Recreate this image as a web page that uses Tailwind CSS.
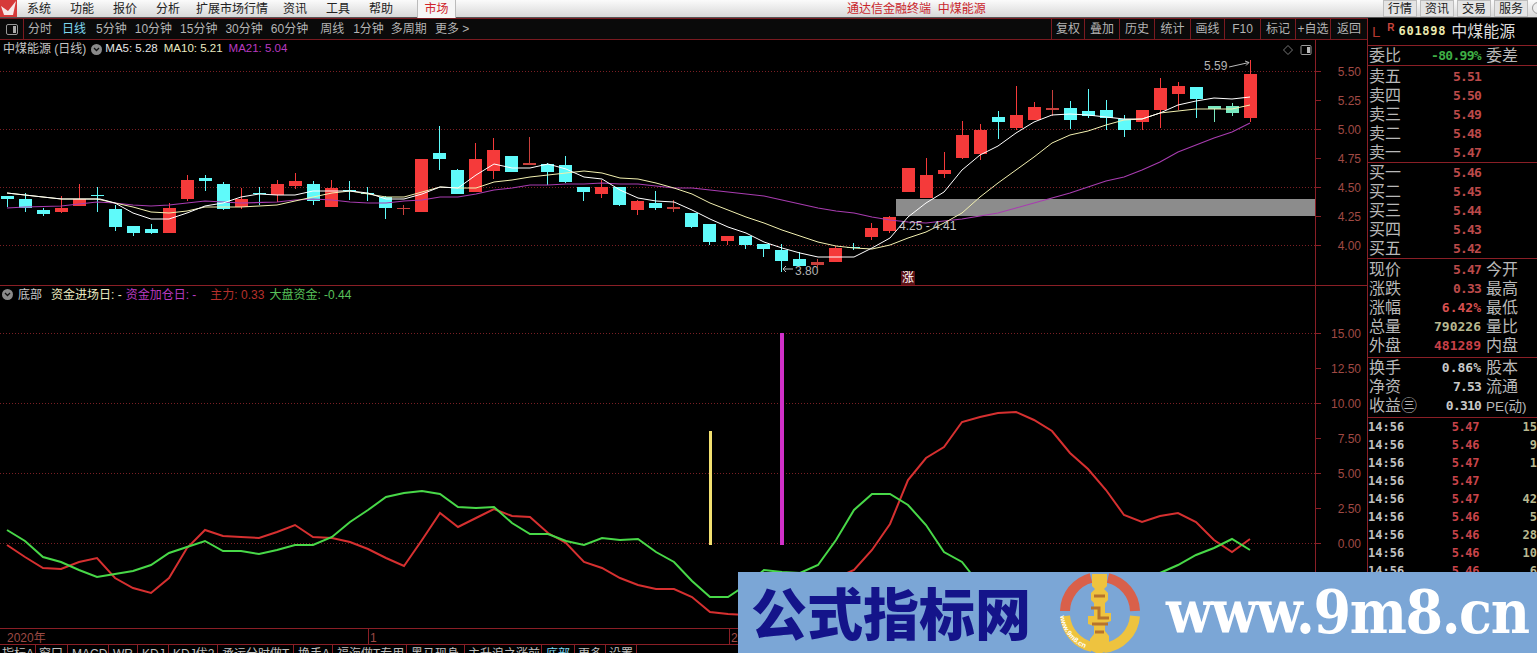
<!DOCTYPE html>
<html lang="zh-CN">
<head>
<meta charset="UTF-8">
<script src="https://cdn.jsdelivr.net/npm/@tailwindcss/browser@4"></script>
<title>通达信金融终端 中煤能源</title>
</head>
<body class="bg-black">
<div class="relative w-[1537px] h-[653px] overflow-hidden bg-black font-['Liberation_Sans','Noto_Sans_CJK_SC',sans-serif] text-[#c8c8c8]">

    <!-- title bar -->
    <div class="relative flex items-center h-[18px] bg-gradient-to-b from-[#fbfbfb] to-[#d8d8d8] text-[#222] text-[12px] border-b border-[#555]">
        <svg class="absolute left-0 top-0" width="17" height="17" viewBox="0 0 17 17"><rect width="17" height="17" fill="#d63a3a"/><path d="M1 6l7 5 8-10-3 14H4z" fill="#f6e8e8"/></svg>
        <div class="flex items-center ml-[27px] gap-[19px]">
            <span>系统</span><span>功能</span><span>报价</span><span>分析</span><span class="-ml-[3px]">扩展市场行情</span><span class="-ml-[4px]">资讯</span><span>工具</span><span>帮助</span>
        </div>
        <div class="ml-[24px] h-[18px] w-[39px] flex items-center justify-center bg-[#f6f6f6] border-x border-[#bbb] text-[#d0242c]">市场</div>
        <div class="absolute left-[847px] text-[#c9252c]">通达信金融终端&nbsp;&nbsp;中煤能源</div>
        <div class="absolute left-[1383px] flex gap-[3px]">
            <span class="w-[34px] h-[17px] flex items-center justify-center bg-[#e4e4e4] border border-[#bdbdbd]">行情</span>
            <span class="w-[34px] h-[17px] flex items-center justify-center bg-[#e4e4e4] border border-[#bdbdbd]">资讯</span>
            <span class="w-[34px] h-[17px] flex items-center justify-center bg-[#e4e4e4] border border-[#bdbdbd]">交易</span>
            <span class="w-[34px] h-[17px] flex items-center justify-center bg-[#e4e4e4] border border-[#bdbdbd]">服务</span>
            <span class="w-[12px] h-[12px] mt-[2px] ml-[1px] rounded-full bg-[#eee] border border-[#999]"></span>
        </div>
    </div>

    <div class="flex h-[635px]">
        <!-- left: toolbar + charts -->
        <div class="relative w-[1367px] shrink-0 flex flex-col">
            <div class="flex shrink-0 items-center h-[22px] bg-[#0a0a0a] border-t border-b border-[#7a1a20] text-[12px] text-[#b4b4b4]">
                <div class="w-[24px] h-full flex items-center justify-center border-r border-[#7a1a20]">
                    <svg width="12" height="11" viewBox="0 0 12 11"><rect x="0.5" y="0.5" width="11" height="10" rx="1.5" fill="none" stroke="#999"/><rect x="7" y="2" width="3" height="7" fill="#aaa"/></svg>
                </div>
                <div class="flex items-center ml-[4px]">
                    <span>分时</span><span class="ml-[10px] text-[#7fd8f0]">日线</span><span class="ml-[10px]">5分钟</span><span class="ml-[8px]">10分钟</span><span class="ml-[8px]">15分钟</span><span class="ml-[8px]">30分钟</span><span class="ml-[8px]">60分钟</span><span class="ml-[12px]">周线</span><span class="ml-[9px]">1分钟</span><span class="ml-[7px]">多周期</span><span class="ml-[8px]">更多 &gt;</span>
                </div>
                <div class="ml-auto flex h-full">
                    <span class="w-[33px] flex items-center justify-center border-l border-[#7a1a20]">复权</span>
                    <span class="w-[35px] flex items-center justify-center border-l border-[#7a1a20]">叠加</span>
                    <span class="w-[35px] flex items-center justify-center border-l border-[#7a1a20]">历史</span>
                    <span class="w-[36px] flex items-center justify-center border-l border-[#7a1a20]">统计</span>
                    <span class="w-[34px] flex items-center justify-center border-l border-[#7a1a20]">画线</span>
                    <span class="w-[36px] flex items-center justify-center border-l border-[#7a1a20]">F10</span>
                    <span class="w-[35px] flex items-center justify-center border-l border-[#7a1a20]">标记</span>
                    <span class="w-[35px] flex items-center justify-center border-l border-[#7a1a20]">+自选</span>
                    <span class="w-[37px] flex items-center justify-center border-l border-[#7a1a20]">返回</span>
                </div>
            </div>

            <!-- price pane -->
            <div class="relative shrink-0 h-[246px] border-b border-[#8a1f26]">
                <svg id="price" class="absolute inset-0" width="1367" height="245" viewBox="0 40 1367 245"></svg>
                <div class="relative flex items-center h-[18px] pl-[3px] text-[12px]">
                    <span class="text-[#c4c4c4]">中煤能源 (日线)</span>
                    <span class="ml-[5px] w-[11px] h-[11px] rounded-full bg-[#8a8a8a] flex items-center justify-center">
                        <svg width="7" height="5" viewBox="0 0 7 5"><path d="M1 1l2.5 2.5L6 1" fill="none" stroke="#111" stroke-width="1.3"/></svg>
                    </span>
                    <span class="ml-[3px] text-[11.5px] text-[#e6e6e6]">MA5: 5.28</span>
                    <span class="ml-[6px] text-[11.5px] text-[#ecebc0]">MA10: 5.21</span>
                    <span class="ml-[6px] text-[11.5px] text-[#b83ac0]">MA21: 5.04</span>
                </div>
            </div>

            <!-- indicator pane -->
            <div class="relative shrink-0 h-[343px] border-b border-[#8a1f26]">
                <svg id="ind" class="absolute inset-0" width="1367" height="342" viewBox="0 286 1367 342"></svg>
                <div class="relative flex items-center h-[17px] pl-[2px] text-[12px]">
                    <span class="w-[11px] h-[11px] rounded-full bg-[#8a8a8a] flex items-center justify-center">
                        <svg width="7" height="5" viewBox="0 0 7 5"><path d="M1 1l2.5 2.5L6 1" fill="none" stroke="#111" stroke-width="1.3"/></svg>
                    </span>
                    <span class="ml-[5px] text-[#c8c8c8]">底部</span>
                    <span class="ml-[9px] text-[#ecebc0]">资金进场日: -</span>
                    <span class="ml-[4px] text-[#b83ac0]">资金加仓日: -</span>
                    <span class="ml-[14px] text-[#b5302c]">主力: 0.33</span>
                    <span class="ml-[5px] text-[#58c05a]">大盘资金: -0.44</span>
                </div>
            </div>

            <!-- date row -->
            <div class="relative shrink-0 h-[16px] border-b border-[#8a1f26] text-[12px] text-[#9c4a44]">
                <span class="absolute left-[7px] top-0">2020年</span>
                <span class="absolute left-[368px] top-0 h-full border-l border-[#8a1f26] pl-[1px]">1</span>
                <span class="absolute left-[729px] top-0 h-full border-l border-[#8a1f26] pl-[1px]">2</span>
            </div>

            <!-- indicator tabs, cut off by the window -->
            <div class="flex shrink-0 h-[20px] text-[12px] text-[#c0c0c0]">
                <span class="w-[36px] pl-[2px] border-r border-[#8a1f26]">指标A</span>
                <span class="w-[32px] pl-[3px] border-r border-[#8a1f26]">窗口</span>
                <span class="w-[41px] pl-[4px] border-r border-[#8a1f26]">MACD</span>
                <span class="w-[29px] pl-[4px] border-r border-[#8a1f26]">WR</span>
                <span class="w-[31px] pl-[4px] border-r border-[#8a1f26]">KDJ</span>
                <span class="w-[49px] pl-[4px] border-r border-[#8a1f26]">KDJ优2</span>
                <span class="w-[76px] pl-[4px] border-r border-[#8a1f26]">承运分时做T</span>
                <span class="w-[39px] pl-[4px] border-r border-[#8a1f26]">换手A</span>
                <span class="w-[74px] pl-[4px] border-r border-[#8a1f26]">福海做T专用</span>
                <span class="w-[58px] pl-[4px] border-r border-[#8a1f26]">黑马现身</span>
                <span class="w-[77px] pl-[3px] border-r border-[#8a1f26]">主升浪之涨前</span>
                <span class="w-[33px] pl-[4px] border-r border-[#8a1f26] text-[#7fd8f0]">底部</span>
                <span class="w-[31px] pl-[3px] border-r border-[#8a1f26]">更多</span>
                <span class="w-[31px] pl-[3px] border-r border-[#8a1f26]">设置</span>
            </div>
        </div>

        <!-- right: quote panel -->
        <div class="w-[170px] shrink-0 border-l border-[#8a1f26] text-[15px] leading-[19px] text-[#b8b8b8]">
            <div class="flex items-center h-[28px] border-b border-[#8a1f26] pl-[4px]">
                <span class="text-[#b5392f] text-[15px]">L</span>
                <span class="ml-[7px] -mt-[8px] text-[#c9453d] text-[10px] font-bold">R</span>
                <span class="ml-[4px] text-[#ecebb0] text-[12px] font-bold font-['DejaVu_Sans_Mono',monospace] tracking-[0.7px]">601898</span>
                <span class="ml-[5px] text-[#ddd] text-[16px]">中煤能源</span>
            </div>
            <div class="flex items-center h-[20px] border-b border-[#8a1f26] text-[16px]">
                <span class="w-[41px] pl-[1px] shrink-0">委比</span>
                <span class="w-[72px] text-right text-[#3fae45] text-[13px] font-bold font-['DejaVu_Sans_Mono',monospace] tracking-[-0.7px]">-80.99%</span>
                <span class="pl-[5px]">委差</span>
            </div>
            <div id="sell" class="h-[97px] pt-[1px] border-b border-[#8a1f26]"></div>
            <div id="buy" class="h-[96px] border-b border-[#8a1f26]"></div>
            <div id="stat" class="h-[99px] pt-[1px] border-b border-[#8a1f26]"></div>
            <div id="fin" class="h-[60px] border-b border-[#8a1f26]"></div>
            <div id="ticks"></div>
        </div>
    </div>

    <!-- watermark banner lying over the screenshot -->
    <div class="absolute left-[738px] top-[572px] w-[799px] h-[81px] bg-[#7ba6d6]">
        <span class="absolute left-[13px] top-[-2px] text-[56px] leading-[81px] font-black text-[#14148a] font-['Noto_Sans_CJK_SC',sans-serif] whitespace-nowrap">公式指标网</span>
        <svg class="absolute left-[320px] top-[0px]" width="84" height="81" viewBox="0 0 84 81">
            <path d="M7 39A35 35 0 0 1 33 6" fill="none" stroke="#d9604a" stroke-width="10"/>
            <path d="M50 6A35 35 0 0 1 77 39" fill="none" stroke="#d9604a" stroke-width="10"/>
            <path d="M77 44A35 35 0 0 1 46 76" fill="none" stroke="#eec33f" stroke-width="10"/>
            <path d="M7 44A35 35 0 0 0 34 75" fill="none" stroke="#eec33f" stroke-width="10"/>
            <path d="M34 2h15v12l-3 3 4 4v7l-3 3v10h6v8l-6 2v8l4 5v14l-7 3h-6l-6-3V67l4-5v-8l-6-2v-8h6V31l-3-3v-7l4-4-3-3z" fill="#eec33f"/>
            <path d="M36 24h11M33 36h8v10h10M34 52h16M37 60h9" fill="none" stroke="#b7742c" stroke-width="3"/>
            <path id="logoArc" d="M2 44A40 40 0 0 0 34 78" fill="none"/>
            <text font-size="7" font-weight="bold" fill="#fff" font-family="Liberation Sans, sans-serif"><textPath href="#logoArc">www.9m8.cn</textPath></text>
        </svg>
        <span class="absolute left-[428px] top-0 origin-left scale-x-90 text-[60px] leading-[81px] font-bold text-white font-['DejaVu_Serif',serif] tracking-[-1.5px] whitespace-nowrap">www.9m8.cn</span>
    </div>
</div>

<script>
    // kind, wick top, body top, body bottom, wick bottom (screen y), one per trading day, 18px apart
    const candles = [
        ['c',196,196,199,207],['c',193,199,208,212],['c',208,210,214,216],['r',196,208,212,213],['r',184,199,206,206],
        ['c',187,195,196,212],['c',205,209,227,231],['c',226,226,233,236],['c',224,229,233,234],['r',203,208,233,233],
        ['r',175,180,199,201],['c',175,178,181,191],['c',182,184,209,210],['r',188,199,207,209],['c',187,193,194,205],
        ['r',180,184,195,202],['r',173,181,186,189],['c',181,184,201,205],['r',180,188,207,207],['c',181,190,191,200],
        ['c',187,193,194,201],['c',196,197,208,219],['r',205,208,209,215],['r',159,159,212,212],['c',126,153,159,170],
        ['c',169,170,194,194],['r',143,159,192,192],['r',138,150,171,179],['c',156,156,172,172],['r',137,163,165,165],
        ['c',163,164,172,185],['c',156,165,182,183],['c',187,187,192,201],['r',180,187,194,198],['c',187,187,205,206],
        ['r',200,201,210,215],['c',191,203,208,210],['r',200,207,209,212],['c',213,213,227,228],['c',224,224,242,245],
        ['r',236,236,241,245],['c',236,236,245,249],['c',244,244,249,257],['c',244,250,261,272],['c',252,259,266,266],
        ['r',259,262,265,268],['r',246,248,262,262],['c',243,247,248,250],['r',223,228,237,240],['r',216,217,231,233],
        ['r',168,168,192,192],['r',158,175,198,198],['r',152,170,174,178],['r',121,135,158,159],['r',124,130,154,160],
        ['c',111,117,122,139],['r',86,115,128,130],['r',102,107,120,120],['r',90,108,110,116],['c',101,108,120,129],
        ['c',89,111,116,118],['c',100,110,118,130],['c',115,119,130,137],['r',110,110,122,130],['r',78,88,110,128],
        ['r',82,86,94,110],['c',87,87,99,118],['g',106,106,109,122],['g',103,106,113,116],['r',60,74,118,122]
    ];

    const ma5 = [[7,193],[43,197],[62,199],[80,199],[100,199],[115,203],[133,213],[151,219],[169,219],[187,213],[205,206],[223,203],[241,197],[259,194],[277,195],[295,195],[313,191],[332,191],[350,191],[368,193],[386,199],[404,199],[422,194],[440,187],[458,188],[476,175],[494,164],[512,168],[530,168],[548,164],[566,169],[584,177],[602,179],[620,190],[638,198],[656,201],[674,202],[692,210],[710,219],[728,227],[746,233],[764,242],[782,248],[800,253],[818,257],[836,257],[854,257],[872,248],[890,238],[908,217],[926,203],[944,192],[962,170],[980,155],[998,146],[1016,133],[1034,122],[1052,115],[1070,114],[1088,115],[1106,117],[1124,119],[1142,119],[1160,113],[1178,105],[1196,101],[1214,98],[1232,99],[1250,97]];
    const ma10 = [[7,193],[25,195],[43,197],[61,199],[97,199],[115,203],[133,207],[151,212],[169,213],[187,211],[205,207],[223,207],[241,207],[259,206],[277,205],[295,201],[313,197],[332,193],[350,191],[368,194],[386,197],[404,197],[422,192],[440,187],[458,188],[476,188],[494,182],[512,180],[530,177],[548,175],[566,173],[584,171],[602,173],[620,178],[638,179],[656,183],[674,188],[692,194],[710,203],[728,210],[746,217],[764,223],[782,230],[800,236],[818,242],[836,246],[854,248],[872,249],[890,245],[908,238],[926,232],[944,223],[962,213],[980,197],[998,183],[1016,170],[1034,157],[1052,143],[1070,135],[1088,131],[1106,125],[1124,120],[1142,119],[1160,113],[1178,111],[1196,109],[1214,109],[1232,109],[1250,105]];
    const ma21 = [[7,208],[25,207],[61,206],[97,202],[115,203],[133,205],[151,206],[169,205],[187,203],[205,201],[223,202],[241,203],[277,202],[295,200],[313,199],[332,200],[350,202],[368,203],[386,203],[404,201],[422,200],[440,197],[458,197],[476,194],[494,190],[512,188],[530,185],[548,185],[566,184],[584,184],[602,183],[620,184],[638,184],[656,186],[674,188],[692,188],[710,190],[728,192],[746,194],[764,196],[782,200],[800,204],[818,208],[836,211],[854,213],[872,217],[890,220],[908,222],[926,223],[944,221],[962,219],[980,216],[998,213],[1016,208],[1034,203],[1052,198],[1070,193],[1088,187],[1106,181],[1124,177],[1142,170],[1160,162],[1178,152],[1196,145],[1214,138],[1232,132],[1250,123]];

    const zhuli = [[7,545],[25,557],[43,568],[61,569],[79,562],[97,558],[115,578],[133,588],[151,593],[169,578],[187,548],[205,530],[223,536],[241,537],[259,538],[277,532],[295,525],[313,537],[332,538],[350,542],[368,549],[386,558],[404,566],[422,540],[440,513],[458,527],[476,518],[494,509],[512,516],[530,517],[548,533],[566,543],[584,562],[602,568],[620,578],[638,585],[656,589],[674,589],[692,597],[710,612],[728,614],[746,615],[800,600],[836,578],[854,570],[872,550],[890,524],[908,480],[926,458],[944,447],[962,422],[980,417],[998,413],[1016,412],[1034,420],[1052,431],[1070,453],[1088,469],[1106,490],[1124,515],[1142,522],[1160,516],[1178,513],[1196,522],[1214,540],[1232,552],[1250,539]];
    const dapan = [[7,530],[25,541],[43,557],[61,562],[79,570],[97,577],[115,574],[133,571],[151,565],[169,553],[187,547],[205,541],[223,551],[241,551],[259,554],[277,550],[295,545],[313,545],[332,537],[350,522],[368,510],[386,497],[404,493],[422,491],[440,494],[458,507],[476,508],[494,507],[512,523],[530,534],[548,534],[566,541],[584,545],[602,538],[620,540],[638,539],[656,552],[674,562],[692,581],[710,597],[728,597],[746,585],[764,570],[782,572],[800,573],[818,565],[836,540],[854,510],[872,494],[890,494],[908,505],[926,525],[944,552],[962,562],[980,585],[1000,610],[1100,610],[1160,573],[1178,565],[1196,555],[1214,548],[1232,539],[1250,550]];

    const RED = '#f53a3a', CYAN = '#5ffafa', GRID = '#7a1f24', LABEL = '#a04a44';

    function line(pts, color, width) {
        return `<polyline points="${pts.map(p => p.join(',')).join(' ')}" fill="none" stroke="${color}" stroke-width="${width}"/>`;
    }

    // Dotted level lines, axis ticks and value labels
    function axis(levels, y0, y1) {
        let s = `<line x1="1315.5" x2="1315.5" y1="${y0}" y2="${y1}" stroke="#8a1f26"/>`;
        levels.forEach(([y, text, dotted]) => {
            if (dotted) s += `<line x1="0" x2="1315" y1="${y}.5" y2="${y}.5" stroke="${GRID}" stroke-dasharray="1 2"/>`;
            s += `<line x1="1315" x2="1321" y1="${y}.5" y2="${y}.5" stroke="#8a1f26"/>`;
            s += `<text x="1361" y="${y + 5}" text-anchor="end" font-size="12" fill="${LABEL}" font-family="Liberation Sans, sans-serif">${text}</text>`;
        });
        return s;
    }

    let price = axis([[71,'5.50',1],[100,'5.25',0],[129,'5.00',1],[158,'4.75',0],[187,'4.50',1],[216,'4.25',0],[245,'4.00',1]], 40, 285);
    candles.forEach(([kind, top, a, b, bottom], i) => {
        const x = Math.round(7 + i * 18.01);
        const color = kind === 'r' ? (b - a < 4 ? '#c8403c' : RED) : kind === 'g' ? '#78e8c0' : CYAN;
        price += `<line x1="${x}.5" x2="${x}.5" y1="${top}" y2="${bottom}" stroke="${color}"/>`;
        price += `<rect x="${x - 6}" y="${a}" width="13" height="${Math.max(b - a, 1)}" fill="${color}"/>`;
    });
    price += `<rect x="896" y="199" width="419" height="17" fill="#8c8c8c"/>`;
    price += line(ma21, '#a83cb0', 1.1) + line(ma10, '#f2f0b0', 1) + line(ma5, '#ffffff', 1);
    price += `<text x="1204" y="70" font-size="12" fill="#b4b4b4" font-family="Liberation Sans, sans-serif">5.59</text>`;
    price += `<path d="M1229 67l20-4.5m-4-1.5l4 1.5-3 3" fill="none" stroke="#bbb"/>`;
    price += `<text x="795" y="275" font-size="12" fill="#b4b4b4" font-family="Liberation Sans, sans-serif">3.80</text>`;
    price += `<path d="M793 269h-10m3-3l-3 3 3 3" fill="none" stroke="#bbb"/>`;
    price += `<text x="899" y="230" font-size="12" fill="#c8c8c8" font-family="Liberation Sans, sans-serif">4.25 - 4.41</text>`;
    price += `<rect x="901" y="271" width="14" height="14" fill="#5a1014"/><text x="908" y="282" text-anchor="middle" font-size="12" fill="#ffffff" font-family="Noto Sans CJK SC, sans-serif">涨</text>`;
    price += `<path d="M1288 45.5l4.5 4.5-4.5 4.5-4.5-4.5z" fill="none" stroke="#777"/>`;
    price += `<rect x="1301" y="45.5" width="10" height="9" rx="1" fill="none" stroke="#999"/><rect x="1307" y="47" width="3" height="6" fill="#bbb"/>`;
    document.getElementById('price').innerHTML = price;

    let ind = axis([[333,'15.00',1],[368,'12.50',0],[403,'10.00',1],[438,'7.50',0],[473,'5.00',1],[508,'2.50',0],[543,'0.00',1]], 286, 628);
    ind += `<rect x="709" y="431" width="3" height="114" fill="#f2e070"/>`;
    ind += `<rect x="780" y="333" width="4" height="212" fill="#d030c8"/>`;
    ind += line(zhuli, '#d63030', 2) + line(dapan, '#48d848', 2);
    document.getElementById('ind').innerHTML = ind;

    // Quote panel rows
    const MONO = "font-['DejaVu_Sans_Mono',monospace] font-bold";
    const TIGHT = 'tracking-[-0.8px]';
    function row(label, value, color, right, spacing) {
        return `<div class="flex items-center h-[19px]">
            <span class="w-[41px] pl-[1px] shrink-0 text-[16px] whitespace-nowrap">${label}</span>
            <span class="w-[72px] text-right text-[13px] ${spacing === undefined ? TIGHT : spacing} ${MONO}" style="color:${color}">${value}</span>
            <span class="pl-[5px] text-[16px] whitespace-nowrap">${right || ''}</span>
        </div>`;
    }
    const PRICE = '#bc4a4a';
    document.getElementById('sell').innerHTML = [['卖五','5.51'],['卖四','5.50'],['卖三','5.49'],['卖二','5.48'],['卖一','5.47']].map(r => row(r[0], r[1], PRICE)).join('');
    document.getElementById('buy').innerHTML = [['买一','5.46'],['买二','5.45'],['买三','5.44'],['买四','5.43'],['买五','5.42']].map(r => row(r[0], r[1], PRICE)).join('');
    document.getElementById('stat').innerHTML = [
        ['现价','5.47',PRICE,'今开',TIGHT],['涨跌','0.33',PRICE,'最高',TIGHT],['涨幅','6.42%','#d85050','最低',''],
        ['总量','790226','#b8b890','量比',''],['外盘','481289','#c84048','内盘','']
    ].map(r => row(r[0], r[1], r[2], r[3], r[4])).join('');
    document.getElementById('fin').innerHTML = [
        ['换手','0.86%','#c8c8c8','股本',''],['净资','7.53','#c8c8c8','流通',TIGHT],
        ['收益㊂','0.310','#c8c8c8','<span class="text-[13.5px]">PE(动)</span>',TIGHT]
    ].map(r => row(r[0], r[1], r[2], r[3], r[4])).join('');

    const ticks = [['5.47','15'],['5.46','9'],['5.47','1'],['5.47',''],['5.47','42'],['5.46','5'],['5.46','28'],['5.46','10'],['5.46','6']];
    document.getElementById('ticks').innerHTML = ticks.map(t => `
        <div class="flex items-center h-[18px] text-[12px] ${MONO}">
            <span class="w-[83px] text-[#c0c0c0]">14:56</span>
            <span class="w-[28px] text-right text-[#c8444a] tracking-[-0.4px]">${t[0]}</span>
            <span class="flex-1 text-right text-[#b8b890]">${t[1]}</span>
        </div>`).join('');
</script>
</body>
</html>
